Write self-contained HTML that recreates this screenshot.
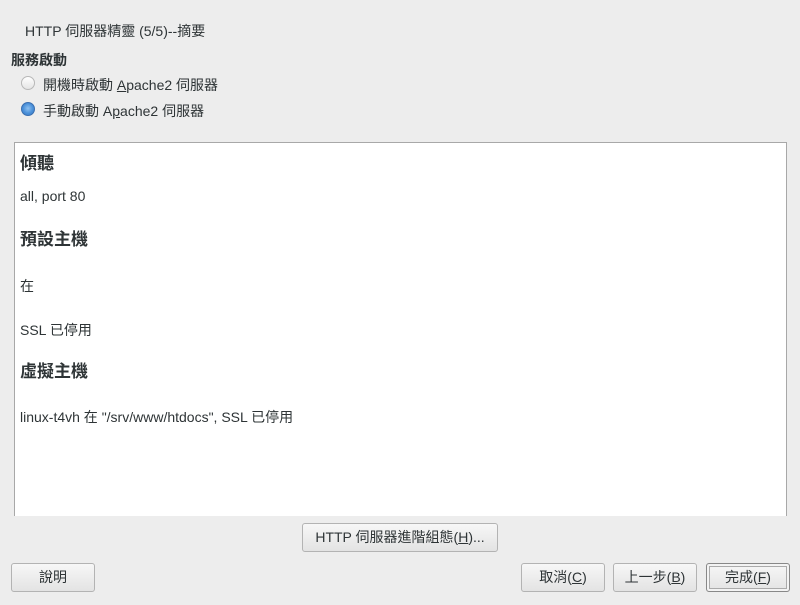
<!DOCTYPE html>
<html><head><meta charset="utf-8"><style>
body{margin:0;width:800px;height:605px;background:#ededed;font-family:"Liberation Sans","Noto Sans CJK TC",sans-serif;color:#2e3436;position:relative;overflow:hidden;font-size:14px}
.a{position:absolute;white-space:nowrap}
.radio{position:absolute;width:12px;height:12px;border-radius:50%;border:1px solid #b8b8b8;background:linear-gradient(#fff,#e4e4e4)}
.radio.on{background:radial-gradient(circle at 50% 45%,#8fc1f0 0,#4a90d9 55%,#3a78c0 100%);border-color:#3a6fb0}
.box{position:absolute;left:14px;top:142px;width:771px;height:373px;background:#fff;border:1px solid #a8a8a8;border-bottom:none}
.btn{position:absolute;border:1px solid #b3b3b3;border-radius:3px;background:linear-gradient(#f7f7f7,#e3e3e3);font-size:14px;text-align:center;line-height:27px;box-sizing:border-box;height:29px;color:#2e3436}
</style></head><body>
<div class="a" style="left:25px;top:21px">HTTP 伺服器精靈 (5/5)--摘要</div>
<div class="a" style="left:11px;top:50px;font-weight:bold">服務啟動</div>
<div class="radio" style="left:21px;top:76px"></div>
<div class="a" style="left:43px;top:75px">開機時啟動 <u>A</u>pache2 伺服器</div>
<div class="radio on" style="left:21px;top:102px"></div>
<div class="a" style="left:43px;top:101px">手動啟動 A<u>p</u>ache2 伺服器</div>
<div class="box">
<div class="a" style="left:5px;top:6px;font-weight:bold;font-size:17px">傾聽</div>
<div class="a" style="left:5px;top:45px">all, port 80</div>
<div class="a" style="left:5px;top:82px;font-weight:bold;font-size:17px">預設主機</div>
<div class="a" style="left:5px;top:133px">在</div>
<div class="a" style="left:5px;top:177px">SSL 已停用</div>
<div class="a" style="left:5px;top:214px;font-weight:bold;font-size:17px">虛擬主機</div>
<div class="a" style="left:5px;top:264px">linux-t4vh 在 "/srv/www/htdocs", SSL 已停用</div>
</div>
<div class="btn" style="left:302px;top:523px;width:196px">HTTP 伺服器進階組態(<u>H</u>)...</div>
<div class="btn" style="left:11px;top:563px;width:84px">說明</div>
<div class="btn" style="left:521px;top:563px;width:84px">取消(<u>C</u>)</div>
<div class="btn" style="left:613px;top:563px;width:84px">上一步(<u>B</u>)</div>
<div class="btn" style="left:706px;top:563px;width:84px;border-color:#888;box-shadow:inset 0 0 0 2px #f3f3f3,inset 0 0 0 3px #aaa">完成(<u>F</u>)</div>
</body></html>
